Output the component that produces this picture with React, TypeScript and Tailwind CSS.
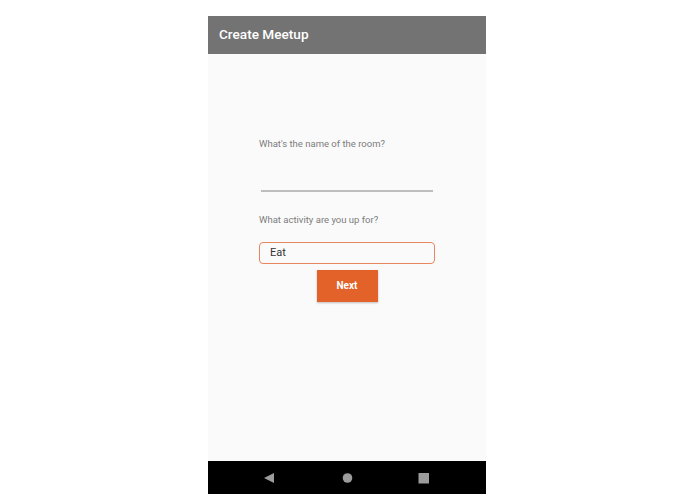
import React from "react";

export default function App() {
  return (
    <div
      className="w-[695px] h-[494px] bg-white flex justify-start pl-[208px] pt-[16px] overflow-hidden"
      style={{ fontFamily: "Roboto, 'Liberation Sans', sans-serif" }}
    >
      <div className="w-[278px] h-[478px] flex flex-col bg-[#fafafa]">
        <div className="h-[38px] bg-[#737373] flex items-center pl-[11px]">
          <span className="text-white text-[13.6px] font-medium leading-none">Create Meetup</span>
        </div>
        <div className="flex-1 flex flex-col pt-[84px] px-[51px]">
          <div className="text-[9.5px] leading-[12px] text-[#7c7c7c]">What's the name of the room?</div>
          <div className="mt-[40px] mx-[2px] h-[1.5px] bg-[#bdbdbd]" />
          <div className="mt-[22px] text-[9.5px] leading-[12px] text-[#7c7c7c]">What activity are you up for?</div>
          <div className="mt-[16px] h-[22px] w-[176px] border border-[#e8875f] rounded-[4px] flex items-center pl-[10px]">
            <span className="text-[11px] text-[#333333] leading-none">Eat</span>
          </div>
          <div className="mt-[6px] flex justify-center">
            <div className="w-[61px] h-[32px] bg-[#e2622a] shadow-[0_1px_2px_rgba(0,0,0,0.25)] flex items-center justify-center">
              <span className="text-white text-[10px] font-bold">Next</span>
            </div>
          </div>
        </div>
        <div className="h-[33px] bg-black flex items-center">
          <div className="w-[278px] flex items-center">
            <svg width="278" height="33" viewBox="0 0 278 33">
              <polygon points="56,17 66,12 66,22" fill="#9c9c9c" />
              <circle cx="139.5" cy="17" r="4.8" fill="#9c9c9c" />
              <rect x="210.5" y="12" width="10.5" height="10.5" fill="#9c9c9c" />
            </svg>
          </div>
        </div>
      </div>
    </div>
  );
}
